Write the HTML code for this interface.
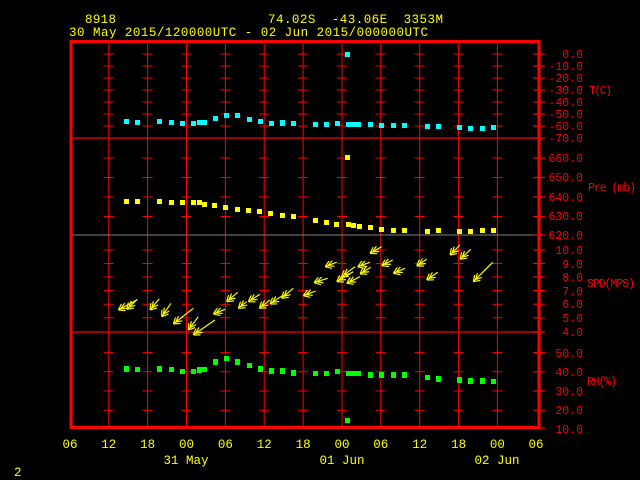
<!DOCTYPE html>
<html><head><meta charset="utf-8"><style>
html,body{margin:0;padding:0;background:#000;width:640px;height:480px;overflow:hidden}
svg{display:block}
text{font-family:"Liberation Mono",monospace;font-size:12.5px}
.y{fill:#ffff00}.r{fill:#ff0000}
.s text{font-size:11.5px}
</style></head><body>
<svg width="640" height="480" viewBox="0 0 640 480" xmlns="http://www.w3.org/2000/svg">
<defs>
<marker id="ah" markerWidth="12" markerHeight="10" refX="0" refY="4" orient="auto" markerUnits="userSpaceOnUse">
<path d="M6,0 L0,4 L6,8 M9,1 L3,4 L9,7" fill="none" stroke="#ffff00" stroke-width="1.2"/>
</marker>
<g id="col" stroke="#ff0000" stroke-width="1">
<line x1="0" y1="44" x2="0" y2="426"/>
<path d="M-5,54h10M-5,66h10M-5,78h10M-5,90h10M-5,102h10M-5,114h10M-5,126h10M-5,158h10M-5,177.5h10M-5,197h10M-5,216.5h10M-5,250h10M-5,263.5h10M-5,277h10M-5,290.6h10M-5,304.2h10M-5,317.8h10M-5,352.6h10M-5,371.8h10M-5,391h10M-5,410.2h10"/>
</g>
</defs>
<text class="y" x="85" y="23" textLength="31">8918</text>
<text class="y" x="268" y="23" xml:space="preserve" textLength="175">74.02S  -43.06E  3353M</text>
<text class="y" x="69" y="36" textLength="359">30 May 2015/120000UTC - 02 Jun 2015/000000UTC</text>

<use href="#col" x="108.8"/><use href="#col" x="147.6"/><use href="#col" x="186.5"/><use href="#col" x="225.4"/><use href="#col" x="264.2"/><use href="#col" x="303.1"/><use href="#col" x="342"/><use href="#col" x="380.8"/><use href="#col" x="419.7"/><use href="#col" x="458.6"/><use href="#col" x="497.4"/>

<line x1="70" y1="138" x2="539" y2="138" stroke="#ff0000" stroke-width="1.2"/>
<line x1="70" y1="235" x2="539" y2="235" stroke="#808080" stroke-width="1"/>
<line x1="70" y1="332" x2="539" y2="332" stroke="#ff0000" stroke-width="1.2"/>
<rect x="71" y="41.5" width="468" height="386" fill="none" stroke="#ff0000" stroke-width="3"/>
<path stroke="#ff0000" stroke-width="1.2" d="M533,54h12M533,66h12M533,78h12M533,90h12M533,102h12M533,114h12M533,126h12M533,138h12M533,158h12M533,177.5h12M533,197h12M533,216.5h12M533,235h12M533,250h12M533,263.5h12M533,277h12M533,290.6h12M533,304.2h12M533,317.8h12M533,332h12M533,352.6h12M533,371.8h12M533,391h12M533,410.2h12M533,428h12"/>

<g class="r s" text-anchor="end">
<text x="583" y="58">0.0</text><text x="583" y="70">-10.0</text><text x="583" y="82">-20.0</text><text x="583" y="94">-30.0</text><text x="583" y="106">-40.0</text><text x="583" y="118">-50.0</text><text x="583" y="130">-60.0</text><text x="583" y="142">-70.0</text>
<text x="583" y="162">660.0</text><text x="583" y="181">650.0</text><text x="583" y="201">640.0</text><text x="583" y="220">630.0</text><text x="583" y="239">620.0</text>
<text x="583" y="254">10.0</text><text x="583" y="268">9.0</text><text x="583" y="281">8.0</text><text x="583" y="295">7.0</text><text x="583" y="308">6.0</text><text x="583" y="322">5.0</text><text x="583" y="336">4.0</text>
<text x="583" y="357">50.0</text><text x="583" y="376">40.0</text><text x="583" y="395">30.0</text><text x="583" y="414">20.0</text><text x="583" y="433">10.0</text>
</g>
<g class="r s">
<text x="589" y="94" textLength="23">T(C)</text><text x="588" y="191" textLength="48">Pre (mb)</text><text x="587" y="287" textLength="48">SPD(MPS)</text><text x="587" y="385" textLength="30">RH(%)</text>
</g>

<g class="y" text-anchor="middle">
<text x="70" y="448">06</text><text x="108.8" y="448">12</text><text x="147.6" y="448">18</text><text x="186.5" y="448">00</text><text x="225.4" y="448">06</text><text x="264.2" y="448">12</text><text x="303.1" y="448">18</text><text x="342" y="448">00</text><text x="380.8" y="448">06</text><text x="419.7" y="448">12</text><text x="458.6" y="448">18</text><text x="497.4" y="448">00</text><text x="536" y="448">06</text>
<text x="186" y="464">31 May</text><text x="342" y="464">01 Jun</text><text x="497" y="464">02 Jun</text>
</g>
<text class="y" x="14" y="476">2</text>

<g fill="#00ffff">
<rect x="345" y="52" width="5" height="5"/>
<rect x="124" y="119" width="5" height="5"/><rect x="135" y="120" width="5" height="5"/><rect x="157" y="119" width="5" height="5"/><rect x="169" y="120" width="5" height="5"/><rect x="180" y="121" width="5" height="5"/><rect x="191" y="121" width="5" height="5"/><rect x="197" y="120" width="5" height="5"/><rect x="202" y="120" width="5" height="5"/><rect x="213" y="116" width="5" height="5"/><rect x="224" y="113" width="5" height="5"/><rect x="235" y="113" width="5" height="5"/><rect x="247" y="117" width="5" height="5"/><rect x="258" y="119" width="5" height="5"/><rect x="269" y="121" width="5" height="5"/><rect x="280" y="120" width="5" height="6"/><rect x="291" y="121" width="5" height="5"/><rect x="313" y="122" width="5" height="5"/><rect x="324" y="122" width="5" height="5"/><rect x="335" y="121" width="5" height="5"/><rect x="346" y="122" width="15" height="5"/><rect x="368" y="122" width="5" height="5"/><rect x="379" y="123" width="5" height="5"/><rect x="391" y="123" width="5" height="5"/><rect x="402" y="123" width="5" height="5"/><rect x="425" y="124" width="5" height="5"/><rect x="436" y="124" width="5" height="5"/><rect x="457" y="125" width="5" height="5"/><rect x="468" y="126" width="5" height="5"/><rect x="480" y="126" width="5" height="5"/><rect x="491" y="125" width="5" height="5"/>
</g>
<g fill="#ffff00">
<rect x="345" y="155" width="5" height="5"/>
<rect x="124" y="199" width="5" height="5"/><rect x="135" y="199" width="5" height="5"/><rect x="157" y="199" width="5" height="5"/><rect x="169" y="200" width="5" height="5"/><rect x="180" y="200" width="5" height="5"/><rect x="191" y="200" width="5" height="5"/><rect x="197" y="200" width="5" height="5"/><rect x="202" y="202" width="5" height="5"/><rect x="212" y="203" width="5" height="5"/><rect x="223" y="205" width="5" height="5"/><rect x="235" y="207" width="5" height="5"/><rect x="246" y="208" width="5" height="5"/><rect x="257" y="209" width="5" height="5"/><rect x="268" y="211" width="5" height="5"/><rect x="280" y="213" width="5" height="5"/><rect x="291" y="214" width="5" height="5"/><rect x="313" y="218" width="5" height="5"/><rect x="324" y="220" width="5" height="5"/><rect x="334" y="222" width="5" height="5"/><rect x="346" y="222" width="5" height="5"/><rect x="351" y="223" width="5" height="5"/><rect x="357" y="224" width="5" height="5"/><rect x="368" y="225" width="5" height="5"/><rect x="379" y="227" width="5" height="5"/><rect x="391" y="228" width="5" height="5"/><rect x="402" y="228" width="5" height="5"/><rect x="425" y="229" width="5" height="5"/><rect x="436" y="228" width="5" height="5"/><rect x="457" y="229" width="5" height="5"/><rect x="468" y="229" width="5" height="5"/><rect x="480" y="228" width="5" height="5"/><rect x="491" y="228" width="5" height="5"/>
</g>
<g fill="#00ff00">
<rect x="345" y="418" width="5" height="5"/>
<rect x="124" y="366" width="5" height="6"/><rect x="135" y="367" width="5" height="5"/><rect x="157" y="366" width="5" height="6"/><rect x="169" y="367" width="5" height="5"/><rect x="180" y="369" width="5" height="5"/><rect x="191" y="369" width="5" height="5"/><rect x="197" y="367" width="5" height="6"/><rect x="202" y="367" width="5" height="5"/><rect x="213" y="359" width="5" height="6"/><rect x="224" y="356" width="5" height="5"/><rect x="235" y="359" width="5" height="6"/><rect x="247" y="363" width="5" height="5"/><rect x="258" y="366" width="5" height="6"/><rect x="269" y="368" width="5" height="6"/><rect x="280" y="368" width="5" height="6"/><rect x="291" y="370" width="5" height="6"/><rect x="313" y="371" width="5" height="5"/><rect x="324" y="371" width="5" height="5"/><rect x="335" y="369" width="5" height="5"/><rect x="346" y="371" width="15" height="5"/><rect x="368" y="372" width="5" height="6"/><rect x="379" y="372" width="5" height="6"/><rect x="391" y="372" width="5" height="6"/><rect x="402" y="372" width="5" height="6"/><rect x="425" y="375" width="5" height="5"/><rect x="436" y="376" width="5" height="6"/><rect x="457" y="377" width="5" height="6"/><rect x="468" y="378" width="5" height="6"/><rect x="480" y="378" width="5" height="6"/><rect x="491" y="379" width="5" height="5"/>
</g>
<g stroke="#ffff00" stroke-width="1.2" fill="none" marker-start="url(#ah)">
<line x1="118.3" y1="310" x2="136.7" y2="300"/>
<line x1="126.7" y1="309.3" x2="137.3" y2="299.3"/>
<line x1="150" y1="310" x2="159.3" y2="298.7"/>
<line x1="161.7" y1="316.7" x2="171" y2="303.3"/>
<line x1="173.3" y1="324" x2="193.3" y2="308.3"/>
<line x1="188.3" y1="330" x2="198.3" y2="316.7"/>
<line x1="193.3" y1="335" x2="215" y2="320"/>
<line x1="213.3" y1="314" x2="225" y2="309.3"/>
<line x1="226.7" y1="301.7" x2="237.7" y2="292.3"/>
<line x1="238.3" y1="308.3" x2="246.7" y2="301.7"/>
<line x1="248.3" y1="301.7" x2="260" y2="294.3"/>
<line x1="259.3" y1="308.3" x2="270" y2="300"/>
<line x1="270" y1="304" x2="283.3" y2="295"/>
<line x1="281.7" y1="298.3" x2="293.3" y2="288.3"/>
<line x1="303.3" y1="295.7" x2="315.7" y2="291"/>
<line x1="314" y1="282.7" x2="327.7" y2="278.3"/>
<line x1="325" y1="266.7" x2="336.7" y2="262.3"/>
<line x1="336.7" y1="281.7" x2="353.3" y2="271.7"/>
<line x1="341.7" y1="276.7" x2="355" y2="266.7"/>
<line x1="346.7" y1="283.3" x2="360" y2="276.7"/>
<line x1="357.7" y1="266.7" x2="370" y2="262.3"/>
<line x1="360" y1="274" x2="370.7" y2="267.3"/>
<line x1="370" y1="253.3" x2="381.7" y2="246.7"/>
<line x1="381.7" y1="265.7" x2="392.7" y2="260"/>
<line x1="393.3" y1="273.3" x2="405" y2="268.3"/>
<line x1="416.7" y1="266" x2="426.7" y2="259.3"/>
<line x1="426.7" y1="280" x2="437.7" y2="272.3"/>
<line x1="450" y1="255" x2="460" y2="245"/>
<line x1="460" y1="259.3" x2="470.7" y2="249.3"/>
<line x1="473.3" y1="281.7" x2="492.7" y2="262.3"/>
</g>
</svg>
</body></html>
